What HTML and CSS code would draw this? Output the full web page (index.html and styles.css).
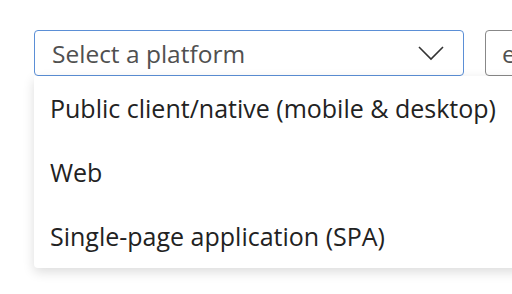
FILE: index.html
```html
<!DOCTYPE html>
<html lang="en">
<head>
<meta charset="UTF-8">
<title>Select a platform</title>
<link rel="stylesheet" href="styles.css">
</head>
<body>
  <div class="toolbar">
    <div class="picker">
      <div class="select">
        <span class="placeholder">Select a platform</span>
        <svg class="chevron" width="28" height="16" viewBox="0 0 28 16">
          <path d="M2 2 L14 14 L26 2" fill="none" stroke="#333" stroke-width="1.6"/>
        </svg>
      </div>
      <ul class="menu">
        <li>Public client/native (mobile &amp; desktop)</li>
        <li>Web</li>
        <li>Single-page application (SPA)</li>
      </ul>
    </div>
    <div class="search">e</div>
  </div>
</body>
</html>
```

FILE: styles.css
```css
* {
  box-sizing: border-box;
  margin: 0;
  padding: 0;
}

body {
  font-family: "Open Sans", "Noto Sans", sans-serif;
  background-color: #fff;
  width: 512px;
  height: 294px;
  overflow: hidden;
}

.toolbar {
  display: flex;
  gap: 21px;
  padding: 30px 0 0 34px;
}

.picker {
  position: relative;
  width: 430px;
  flex-shrink: 0;
}

.select {
  height: 46px;
  border: 1.5px solid #5b8fd6;
  border-radius: 4px;
  display: flex;
  align-items: center;
  justify-content: space-between;
  padding: 0 18px 0 17px;
}

.placeholder {
  font-size: 24.5px;
  color: #505050;
}

.chevron {
  display: block;
}

.menu {
  position: absolute;
  top: 46px;
  left: 0;
  width: 490px;
  list-style: none;
  background-color: #fff;
  border-radius: 0 0 4px 4px;
  box-shadow: 0 4px 12px rgba(0, 0, 0, 0.14);
}

.menu li {
  height: 64px;
  display: flex;
  align-items: center;
  padding-left: 16px;
  font-size: 25px;
  color: #222;
  white-space: nowrap;
}

.search {
  flex-shrink: 0;
  width: 60px;
  height: 46px;
  border: 1.5px solid #888;
  border-radius: 4px;
  padding-left: 16px;
  font-size: 24.5px;
  color: #505050;
  display: flex;
  align-items: center;
  overflow: hidden;
}
```
